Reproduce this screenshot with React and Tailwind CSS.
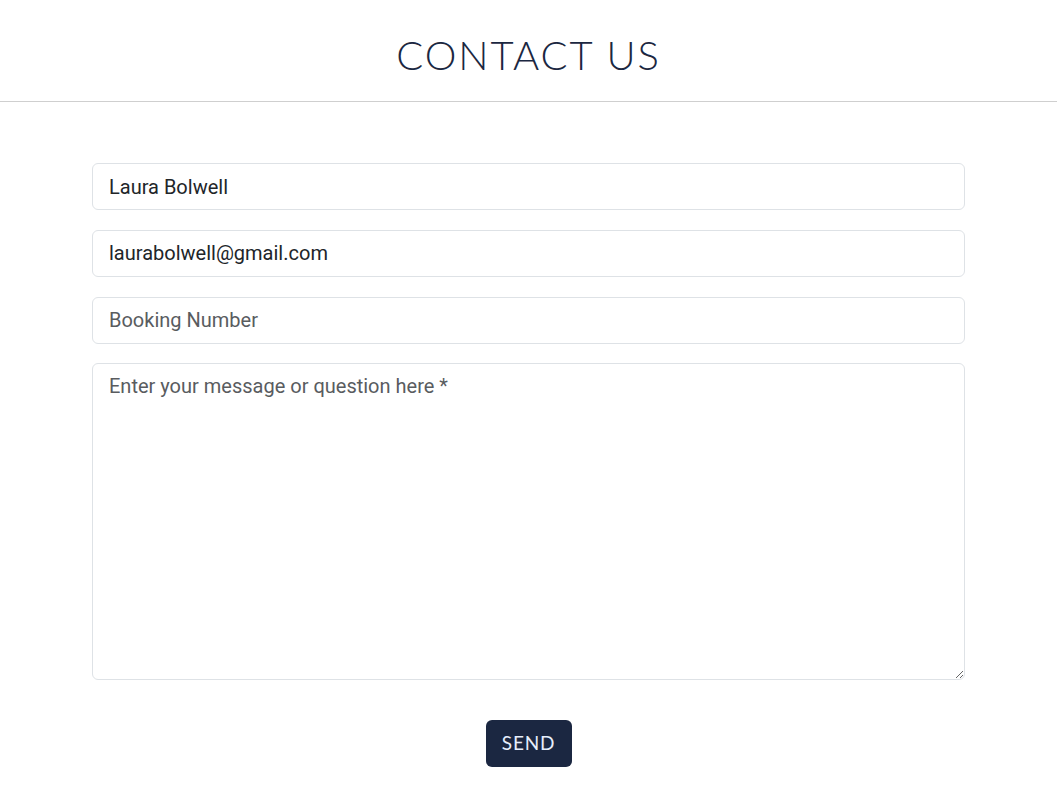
export default function App() {
  const field =
    'block w-full h-[47px] rounded-md border border-[#dee2e6] bg-white px-4 text-[20px] text-[#212529] placeholder:text-[#595c5f] outline-none';

  return (
    <div className="min-h-screen bg-white font-['Roboto',sans-serif]">
      {/* Header */}
      <header className="h-[102px] border-b border-[#cfcfcf] flex items-center justify-center">
        <h1 className="font-['Lato',sans-serif] font-light text-[40px] tracking-[0.05em] text-[#1b2741] uppercase leading-none pt-[9px]">
          Contact Us
        </h1>
      </header>

      {/* Form */}
      <form className="w-[873px] mx-auto pt-[61px] flex flex-col gap-[19.75px]">
        <input className={field} defaultValue="Laura Bolwell" />
        <input className={field} defaultValue="laurabolwell@gmail.com" />
        <input className={field} placeholder="Booking Number" />
        <textarea
          className="block w-full h-[317px] rounded-md border border-[#dee2e6] bg-white px-4 py-[7px] text-[20px] text-[#212529] placeholder:text-[#595c5f] outline-none"
          placeholder="Enter your message or question here *"
        />
        <div className="flex justify-center pt-5">
          <button
            type="button"
            className="h-[47px] w-[86px] rounded-md bg-[#1b2741] text-[#e6eefc] font-['Lato',sans-serif] text-[19px] tracking-[0.04em]"
          >
            SEND
          </button>
        </div>
      </form>
    </div>
  );
}
